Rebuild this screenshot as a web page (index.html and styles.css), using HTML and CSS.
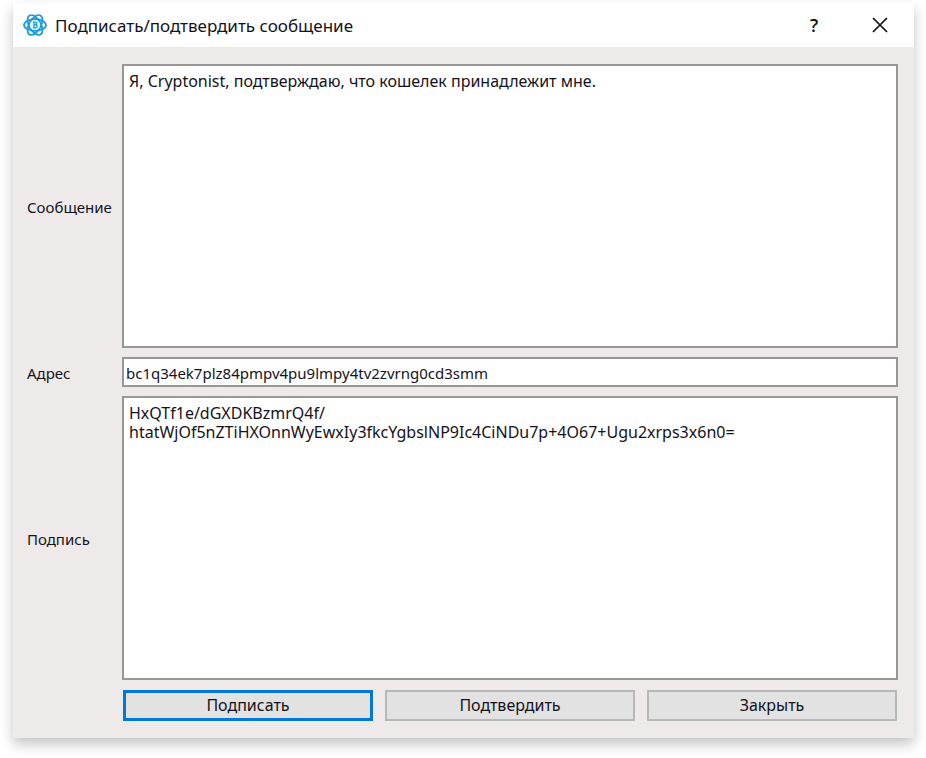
FILE: index.html
```html
<!DOCTYPE html>
<html lang="ru">
<head>
<meta charset="utf-8">
<meta name="viewport" content="width=device-width, initial-scale=1">
<title>Подписать/подтвердить сообщение</title>
<link rel="stylesheet" href="styles.css">
</head>
<body>
<main class="window">
  <header class="titlebar">
    <svg class="logo" viewBox="0 0 24 24" aria-hidden="true">
      <g fill="none" stroke="#159bdd" stroke-width="1.7">
        <ellipse cx="12" cy="12" rx="11" ry="5.8"/>
        <ellipse cx="12" cy="12" rx="11" ry="5.8" transform="rotate(60 12 12)"/>
        <ellipse cx="12" cy="12" rx="11" ry="5.8" transform="rotate(120 12 12)"/>
      </g>
      <circle cx="12" cy="12" r="5" fill="#e4f5fd"/>
      <path d="M11 9v6M10 9.2h2.5a1.3 1.3 0 0 1 0 2.6H11h1.7a1.5 1.5 0 0 1 0 3H10" fill="none" stroke="#159bdd" stroke-width="1.2"/>
    </svg>
    <h1 class="title">Подписать/подтвердить сообщение</h1>
    <button class="tool help" type="button" aria-label="Справка">?</button>
    <button class="tool" type="button" aria-label="Закрыть окно">
      <svg class="cross" viewBox="0 0 16 16" aria-hidden="true"><path d="M1 1l14 14M15 1L1 15" fill="none" stroke="#111" stroke-width="1.7"/></svg>
    </button>
  </header>
  <form class="form">
    <label class="label" for="message">Сообщение</label>
    <textarea class="field area" id="message" spellcheck="false">Я, Cryptonist, подтверждаю, что кошелек принадлежит мне.</textarea>
    <label class="label" for="address">Адрес</label>
    <input class="field line" id="address" type="text" spellcheck="false" value="bc1q34ek7plz84pmpv4pu9lmpy4tv2zvrng0cd3smm">
    <label class="label" for="signature">Подпись</label>
    <textarea class="field area" id="signature" spellcheck="false">HxQTf1e/dGXDKBzmrQ4f/
htatWjOf5nZTiHXOnnWyEwxIy3fkcYgbslNP9Ic4CiNDu7p+4O67+Ugu2xrps3x6n0=</textarea>
    <div class="actions">
      <button class="button primary" type="button">Подписать</button>
      <button class="button" type="button">Подтвердить</button>
      <button class="button" type="button">Закрыть</button>
    </div>
  </form>
</main>
</body>
</html>
```
FILE: styles.css
```css
* {
  box-sizing: border-box;
}

body {
  margin: 0;
  padding: 3px 12px 20px 13px;
  min-height: 100vh;
  display: flex;
  background: #fff;
  color: #14121c;
  font: 16px/19px "Noto Sans", "Open Sans", sans-serif;
}

.window {
  flex: 1;
  display: flex;
  flex-direction: column;
  background: #eeeaea;
  box-shadow: 0 6px 12px rgba(0, 0, 0, 0.24);
}

.titlebar {
  display: flex;
  align-items: center;
  height: 44px;
  padding: 0 10px;
  background: #fff;
}

.logo {
  width: 24px;
  height: 24px;
  margin-right: 8px;
}

.title {
  flex: 1;
  margin: 0;
  font-size: 17px;
  font-weight: 400;
}

.tool {
  display: flex;
  align-items: center;
  justify-content: center;
  width: 48px;
  height: 32px;
  margin-left: 18px;
  padding: 0;
  border: 0;
  background: none;
  color: #111;
}

.help {
  font: 600 18px/20px "Open Sans", sans-serif;
}

.cross {
  width: 16px;
  height: 16px;
}

.form {
  flex: 1;
  display: grid;
  grid-template-columns: 86px 1fr;
  grid-template-rows: 1fr auto 1fr auto;
  align-items: center;
  gap: 9px;
  padding: 17px 16px 17px 14px;
}

.label {
  padding-top: 2px;
  font-size: 15px;
}

.field {
  width: 100%;
  margin: 0;
  border: 2px solid #979797;
  border-radius: 0;
  background: #fff;
  color: inherit;
  font: inherit;
  outline: 0;
}

.area {
  display: block;
  height: 100%;
  padding: 6px 5px;
  resize: none;
}

.line {
  height: 30px;
  padding: 2px 2px 0;
  font-size: 15px;
}

.actions {
  grid-column: 2;
  display: grid;
  grid-template-columns: repeat(3, 1fr);
  gap: 12px;
  padding: 1px 1px 0;
}

.button {
  height: 31px;
  padding: 0;
  border: 2px solid #b7b8b8;
  background: #e2e2e2;
  color: inherit;
  font: inherit;
}

.primary {
  border: 3px solid #0078d7;
}
```
